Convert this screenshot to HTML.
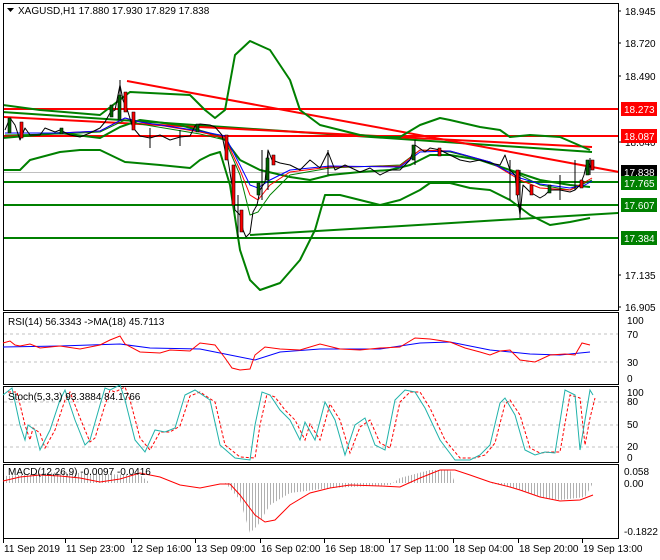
<!DOCTYPE html>
<html><head><meta charset="utf-8"><style>
body{margin:0;background:#fff;}
svg{display:block;font-family:"Liberation Sans",sans-serif;font-size:10px;}
</style></head><body>
<svg width="660" height="560" viewBox="0 0 660 560" xmlns="http://www.w3.org/2000/svg">
<defs>
<pattern id="hist" width="3" height="10" patternUnits="userSpaceOnUse"><rect x="0" y="0" width="1" height="10" fill="#b0b0b0"/></pattern>
<clipPath id="mc"><rect x="4" y="4" width="614" height="306"/></clipPath>
</defs>
<rect width="660" height="560" fill="#fff"/>
<!-- panels -->
<g fill="none" stroke="#000" stroke-width="1">
<rect x="3.5" y="3.5" width="615" height="307"/>
<rect x="3.5" y="312.5" width="615" height="72"/>
<rect x="3.5" y="386.5" width="615" height="76"/>
<rect x="3.5" y="464.5" width="615" height="74"/>
</g>
<g clip-path="url(#mc)" fill="none" stroke-linejoin="round">
<line x1="4" y1="172.5" x2="618" y2="172.5" stroke="#c0c0c0"/>
<!-- horizontals -->
<g stroke="#008000" stroke-width="2">
<line x1="3" y1="182" x2="618" y2="182"/>
<line x1="3" y1="205" x2="618" y2="205"/>
<line x1="3" y1="238" x2="618" y2="238"/>
<line x1="250" y1="235" x2="619" y2="213"/>
<line x1="3" y1="112" x2="592" y2="152"/>
</g>
<g stroke="#ff0000" stroke-width="2">
<line x1="3" y1="109" x2="618" y2="109"/>
<line x1="3" y1="136" x2="618" y2="136"/>
<line x1="127" y1="81" x2="619" y2="172"/>
<line x1="3" y1="117" x2="592" y2="147"/>
</g>
<!-- bollinger -->
<g stroke="#008000" stroke-width="2">
<polyline points="3,105 40,110 100,115 130,92 190,95 205,110 215,118 225,110 235,55 250,41 270,50 290,80 300,110 320,125 340,130 360,135 380,137 400,137 420,125 440,118 450,120 480,127 500,130 510,137 530,135 560,137 590,150"/>
<polyline points="3,170 20,170 30,160 60,152 80,150 100,150 125,162 160,165 190,168 200,160 210,155 220,152 230,185 240,250 250,280 260,290 280,283 300,260 315,230 325,195 340,195 360,200 380,205 400,200 420,190 430,183 450,183 470,188 490,190 510,200 530,215 550,225 570,222 590,218"/>
<polyline points="3,138 60,133 100,138 120,127 140,120 180,125 215,135 225,140 240,160 260,170 290,177 310,180 330,175 360,172 390,170 410,165 430,155 450,155 480,160 510,170 540,180 570,185 590,187"/>
</g>
<!-- MAs -->
<polyline stroke="#008000" stroke-width="1" points="5,135 60,134 100,132 125,120 140,124 200,134 225,140 240,175 250,215 258,212 270,195 290,175 330,168 400,165 420,150 450,152 490,162 520,175 540,185 570,190 585,183 592,180"/>
<polyline stroke="#ff0000" stroke-width="1" points="5,133 60,133 100,131 125,118 140,122 200,132 225,138 240,170 250,195 258,200 270,185 290,172 330,167 400,166 420,150 450,151 490,162 520,180 540,188 570,190 585,182 592,178"/>
<polyline stroke="#0000ff" stroke-width="1" points="5,133 60,133 100,131 125,118 140,122 200,131 225,136 240,165 250,185 258,188 270,180 290,170 330,166 400,167 420,152 450,151 490,162 520,178 540,184 570,188 585,185 592,181"/>
<!-- price -->
<polyline stroke="#000" stroke-width="1" points="5,130 10,118 15,125 20,140 25,128 30,135 40,135 45,128 55,132 60,130 70,135 80,137 90,133 100,128 105,122 110,113 115,110 120,85 123,100 128,112 132,125 135,130 140,136 150,138 160,135 170,140 180,137 190,136 195,126 200,124 210,125 215,127 222,135 225,150 228,160 232,185 235,210 240,215 243,230 246,237 250,233 253,212 257,205 260,190 265,182 268,150 272,160 280,163 290,165 300,170 310,160 320,168 328,152 335,170 345,165 360,172 370,168 380,175 390,170 400,170 410,160 415,145 425,152 430,148 440,150 450,155 460,160 470,162 480,160 490,163 500,165 505,155 510,170 515,175 518,200 520,215 523,185 530,192 540,198 545,195 550,190 560,190 570,192 575,190 580,185 584,175 587,162 590,165 593,170"/>
<g stroke="#000" stroke-width="1">
<path d="M120 80V118M238 195V238M262 150V200M268 150V190M328 150V175M415 140V165M520 170V218M510 160V200M575 160V190M590 158V175M150 128V148M180 130V146M560 175V200"/>
</g>
<g fill="#006400" stroke="#000" stroke-width="0.6">
<rect x="8" y="118" width="3" height="15"/><rect x="60" y="128" width="3" height="6"/><rect x="110" y="105" width="3" height="12"/><rect x="118" y="95" width="3" height="25"/><rect x="196" y="124" width="3" height="8"/><rect x="257" y="183" width="3" height="12"/><rect x="266" y="158" width="3" height="22"/><rect x="412" y="145" width="3" height="15"/><rect x="586" y="160" width="3" height="15"/><rect x="548" y="185" width="3" height="8"/></g>
<g fill="#ff0000" stroke="#000" stroke-width="0.6">
<rect x="20" y="122" width="3" height="16"/><rect x="124" y="92" width="3" height="20"/><rect x="132" y="112" width="3" height="18"/><rect x="225" y="135" width="3" height="25"/><rect x="232" y="165" width="3" height="40"/><rect x="240" y="210" width="3" height="22"/><rect x="272" y="155" width="3" height="10"/><rect x="438" y="148" width="3" height="8"/><rect x="516" y="170" width="3" height="25"/><rect x="530" y="185" width="3" height="10"/><rect x="591" y="160" width="3" height="10"/><rect x="580" y="180" width="3" height="8"/></g>
</g>
<!-- title -->
<path d="M7 8h7l-3.5 4z" fill="#000"/>
<text x="18" y="14" fill="#000">XAGUSD,H1  17.880 17.930 17.829 17.838</text>
<!-- price axis -->
<g fill="#000">
<text x="625" y="15">18.945</text><text x="625" y="47">18.720</text><text x="625" y="80">18.490</text>
<text x="625" y="146">18.040</text><text x="625" y="279">17.135</text><text x="625" y="311">16.905</text>
</g>
<g stroke="#000"><path d="M618 11h3M618 43h3M618 76h3M618 142h3M618 275h3M618 307h3"/></g>
<rect x="621" y="102" width="36" height="14" fill="#ff0000"/><text x="624" y="113" fill="#fff">18.273</text>
<rect x="621" y="129" width="36" height="14" fill="#ff0000"/><text x="624" y="140" fill="#fff">18.087</text>
<rect x="621" y="165" width="36" height="14" fill="#000"/><text x="624" y="176" fill="#fff">17.838</text>
<rect x="621" y="176" width="36" height="14" fill="#008000"/><text x="624" y="187" fill="#fff">17.765</text>
<rect x="621" y="198" width="36" height="14" fill="#008000"/><text x="624" y="209" fill="#fff">17.607</text>
<rect x="621" y="231" width="36" height="14" fill="#008000"/><text x="624" y="242" fill="#fff">17.384</text>
<!-- RSI -->
<g stroke="#c0c0c0" stroke-dasharray="3,3"><line x1="4" y1="334" x2="618" y2="334"/><line x1="4" y1="362" x2="618" y2="362"/></g>
<polyline fill="none" stroke="#0000ff" stroke-width="1" points="3,347 60,346 120,344 150,348 200,349 230,355 255,360 280,352 320,349 380,349 420,343 450,342 490,350 530,354 560,355 590,352"/>
<polyline fill="none" stroke="#ff0000" stroke-width="1" points="3,343 10,341 15,345 20,346 30,344 40,348 60,346 80,349 100,345 110,340 120,336 125,344 140,352 160,353 170,350 190,351 200,343 215,345 225,358 232,368 240,370 250,369 255,355 265,347 280,349 300,350 320,344 340,349 360,350 380,348 400,347 415,338 430,339 450,342 465,348 480,352 490,355 500,351 510,350 520,360 535,362 550,355 565,354 575,355 582,343 590,345"/>
<text x="8" y="325" fill="#000">RSI(14) 56.3343  -&gt;MA(18) 45.7113</text>
<g fill="#000"><text x="627" y="324">100</text><text x="627" y="338">70</text><text x="627" y="366">30</text><text x="627" y="382">0</text></g>
<!-- Stoch -->
<g stroke="#c0c0c0" stroke-dasharray="3,3"><line x1="4" y1="402" x2="618" y2="402"/><line x1="4" y1="425" x2="618" y2="425"/><line x1="4" y1="447" x2="618" y2="447"/></g>
<polyline fill="none" stroke="#ff0000" stroke-dasharray="3,2" points="8,392 17,392 25,425 30,440 33,428 40,433 45,448 55,430 65,400 70,392 80,418 90,442 95,438 105,405 110,390 115,392 125,387 130,400 140,438 150,450 160,432 170,432 180,426 190,396 200,392 215,402 225,445 240,457 255,458 260,425 267,394 275,397 285,410 295,420 305,440 310,424 320,440 330,404 340,420 350,453 360,427 370,420 380,443 390,448 400,402 410,392 420,392 430,408 445,440 460,458 475,458 485,455 495,443 505,404 510,400 520,415 530,448 540,453 550,452 560,452 570,395 580,398 585,445 590,418 595,398"/>
<polyline fill="none" stroke="#20b2aa" stroke-width="1" points="3,395 12,388 20,425 25,440 28,425 35,430 40,450 50,430 60,400 65,390 75,420 85,445 90,440 100,405 105,388 110,390 120,385 125,400 135,440 145,452 155,430 165,432 175,428 185,395 195,390 210,400 220,445 235,458 250,460 255,425 262,392 270,395 280,410 290,420 300,440 305,422 315,440 325,402 335,420 345,455 355,425 365,418 375,445 385,450 395,400 405,390 415,392 425,408 440,440 455,460 470,460 480,455 490,445 500,403 505,398 515,415 525,450 535,455 545,452 555,453 565,390 575,395 580,450 585,420 590,390 593,395"/>
<text x="8" y="400" fill="#000">Stoch(5,3,3) 93.3884 84.1766</text>
<g fill="#000"><text x="627" y="396">100</text><text x="627" y="405">80</text><text x="627" y="428">50</text><text x="627" y="450">20</text><text x="627" y="461">0</text></g>
<!-- MACD -->
<polygon fill="url(#hist)" points="5,483 5,476 60,472 100,474 140,475 150,483 225,483 228,486 240,500 250,533 258,525 270,505 290,493 330,488 390,485 400,478 430,470 450,470 455,483 490,483 510,487 540,497 560,500 585,497 593,483"/>
<polyline fill="none" stroke="#ff0000" stroke-width="1" points="3,481 20,477 40,475 60,476 80,478 100,482 120,479 140,473 160,477 180,485 200,488 220,484 230,484 240,495 255,515 265,522 275,520 290,505 310,493 330,488 350,485 380,486 400,487 420,478 440,470 455,470 470,475 490,482 510,487 520,490 540,497 560,501 580,500 593,495"/>
<text x="8" y="475" fill="#000">MACD(12,26,9) -0.0097 -0.0416</text>
<g fill="#000"><text x="624" y="475">0.058</text><text x="624" y="487">0.00</text><text x="624" y="535">-0.1822</text></g>
<!-- time axis -->
<g stroke="#000"><path d="M3.5 539v4M65.5 539v4M131.5 539v4M195.5 539v4M260.5 539v4M324.5 539v4M389.5 539v4M453.5 539v4M518.5 539v4M582.5 539v4"/></g>
<g fill="#000">
<text x="4" y="552">11 Sep 2019</text><text x="66" y="552">11 Sep 23:00</text><text x="132" y="552">12 Sep 16:00</text><text x="196" y="552">13 Sep 09:00</text><text x="261" y="552">16 Sep 02:00</text><text x="325" y="552">16 Sep 18:00</text><text x="390" y="552">17 Sep 11:00</text><text x="454" y="552">18 Sep 04:00</text><text x="519" y="552">18 Sep 20:00</text><text x="583" y="552">19 Sep 13:00</text>
</g>
</svg>
</body></html>
